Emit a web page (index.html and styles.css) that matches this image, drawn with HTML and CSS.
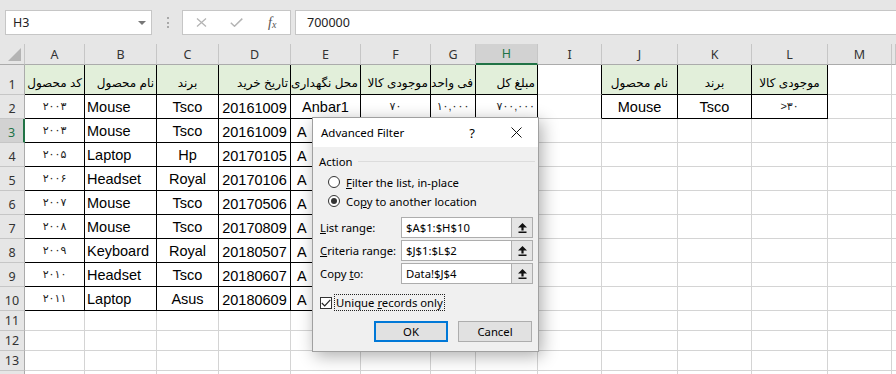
FILE: index.html
```html
<!DOCTYPE html>
<html>
<head>
    <meta charset="UTF-8">
    <title>Advanced Filter</title>
    <link rel="stylesheet" href="styles.css">
</head>
<body>
<div class="app">
    <!-- formula bar -->
    <div class="formula-bar">
        <div class="name-box">
            <span>H3</span>
            <span class="drop"></span>
        </div>
        <div class="grip"><i></i><i></i><i></i></div>
        <div class="fx-box">
            <svg width="11" height="9" viewBox="0 0 11 9"><path d="M1 0.5 L10 8.5 M10 0.5 L1 8.5" stroke="#b4b4b4" stroke-width="1.3" fill="none"/></svg>
            <svg width="13" height="9" viewBox="0 0 13 9"><path d="M0.8 4.8 L4.5 8.2 L12.3 0.6" stroke="#b4b4b4" stroke-width="1.5" fill="none"/></svg>
            <span class="fx">f<sub>x</sub></span>
        </div>
        <div class="formula-input">700000</div>
    </div>

    <!-- sheet -->
    <div class="sheet">
        <div class="row col-head">
            <div class="corner"><span class="corner-tri"></span></div>
            <div class="ch">A</div><div class="ch">B</div><div class="ch">C</div><div class="ch">D</div>
            <div class="ch">E</div><div class="ch">F</div><div class="ch">G</div><div class="ch sel">H</div>
            <div class="ch">I</div><div class="ch">J</div><div class="ch">K</div><div class="ch">L</div>
            <div class="ch">M</div><div class="ch"></div>
        </div>

        <div class="row r1">
            <div class="rh">1</div>
            <div class="c t h ar fa">کد محصول</div>
            <div class="c t h ar fa">نام محصول</div>
            <div class="c t h ac fa">برند</div>
            <div class="c t h ar fa">تاریخ خرید</div>
            <div class="c t h ar fa">محل نگهداری</div>
            <div class="c t h ar fa">موجودی کالا</div>
            <div class="c t h ar fa">فی واحد</div>
            <div class="c t h ar fa">مبلغ کل</div>
            <div class="c bl"></div>
            <div class="c t h ac fa">نام محصول</div>
            <div class="c t h ac fa">برند</div>
            <div class="c t h ac fa">موجودی کالا</div>
            <div class="c"></div><div class="c"></div>
        </div>

        <div class="row rd">
            <div class="rh">2</div>
            <div class="c t ac fn">۲۰۰۳</div><div class="c t al">Mouse</div><div class="c t ac">Tsco</div><div class="c t ac dt">20161009</div>
            <div class="c t ac">Anbar1</div><div class="c t ac fn">۷۰</div><div class="c t ac fn">۱۰,۰۰۰</div><div class="c t ar fn">۷۰۰,۰۰۰</div>
            <div class="c bl"></div>
            <div class="c t ac">Mouse</div><div class="c t ac">Tsco</div><div class="c t ac fn">&gt;۳۰</div>
            <div class="c"></div><div class="c"></div>
        </div>

        <div class="row rd">
            <div class="rh active">3</div>
            <div class="c t ac fn">۲۰۰۳</div><div class="c t al">Mouse</div><div class="c t ac">Tsco</div><div class="c t ac dt">20161009</div>
            <div class="c t al ea">A</div><div class="c t"></div><div class="c t"></div><div class="c t"></div>
            <div class="c"></div><div class="c"></div><div class="c"></div><div class="c"></div><div class="c"></div><div class="c"></div>
        </div>

        <div class="row rd">
            <div class="rh">4</div>
            <div class="c t ac fn">۲۰۰۵</div><div class="c t al">Laptop</div><div class="c t ac">Hp</div><div class="c t ac dt">20170105</div>
            <div class="c t al ea">A</div><div class="c t"></div><div class="c t"></div><div class="c t"></div>
            <div class="c"></div><div class="c"></div><div class="c"></div><div class="c"></div><div class="c"></div><div class="c"></div>
        </div>

        <div class="row rd">
            <div class="rh">5</div>
            <div class="c t ac fn">۲۰۰۶</div><div class="c t al">Headset</div><div class="c t ac">Royal</div><div class="c t ac dt">20170106</div>
            <div class="c t al ea">A</div><div class="c t"></div><div class="c t"></div><div class="c t"></div>
            <div class="c"></div><div class="c"></div><div class="c"></div><div class="c"></div><div class="c"></div><div class="c"></div>
        </div>

        <div class="row rd">
            <div class="rh">6</div>
            <div class="c t ac fn">۲۰۰۷</div><div class="c t al">Mouse</div><div class="c t ac">Tsco</div><div class="c t ac dt">20170506</div>
            <div class="c t al ea">A</div><div class="c t"></div><div class="c t"></div><div class="c t"></div>
            <div class="c"></div><div class="c"></div><div class="c"></div><div class="c"></div><div class="c"></div><div class="c"></div>
        </div>

        <div class="row rd">
            <div class="rh">7</div>
            <div class="c t ac fn">۲۰۰۸</div><div class="c t al">Mouse</div><div class="c t ac">Tsco</div><div class="c t ac dt">20170809</div>
            <div class="c t al ea">A</div><div class="c t"></div><div class="c t"></div><div class="c t"></div>
            <div class="c"></div><div class="c"></div><div class="c"></div><div class="c"></div><div class="c"></div><div class="c"></div>
        </div>

        <div class="row rd">
            <div class="rh">8</div>
            <div class="c t ac fn">۲۰۰۹</div><div class="c t al">Keyboard</div><div class="c t ac">Royal</div><div class="c t ac dt">20180507</div>
            <div class="c t al ea">A</div><div class="c t"></div><div class="c t"></div><div class="c t"></div>
            <div class="c"></div><div class="c"></div><div class="c"></div><div class="c"></div><div class="c"></div><div class="c"></div>
        </div>

        <div class="row rd">
            <div class="rh">9</div>
            <div class="c t ac fn">۲۰۱۰</div><div class="c t al">Headset</div><div class="c t ac">Tsco</div><div class="c t ac dt">20180607</div>
            <div class="c t al ea">A</div><div class="c t"></div><div class="c t"></div><div class="c t"></div>
            <div class="c"></div><div class="c"></div><div class="c"></div><div class="c"></div><div class="c"></div><div class="c"></div>
        </div>

        <div class="row rd">
            <div class="rh">10</div>
            <div class="c t ac fn">۲۰۱۱</div><div class="c t al">Laptop</div><div class="c t ac">Asus</div><div class="c t ac dt">20180609</div>
            <div class="c t al ea">A</div><div class="c t"></div><div class="c t"></div><div class="c t"></div>
            <div class="c"></div><div class="c"></div><div class="c"></div><div class="c"></div><div class="c"></div><div class="c"></div>
        </div>

        <div class="row re">
            <div class="rh">11</div>
            <div class="c"></div><div class="c"></div><div class="c"></div><div class="c"></div><div class="c"></div><div class="c"></div><div class="c"></div>
            <div class="c"></div><div class="c"></div><div class="c"></div><div class="c"></div><div class="c"></div><div class="c"></div><div class="c"></div>
        </div>
        <div class="row re">
            <div class="rh">12</div>
            <div class="c"></div><div class="c"></div><div class="c"></div><div class="c"></div><div class="c"></div><div class="c"></div><div class="c"></div>
            <div class="c"></div><div class="c"></div><div class="c"></div><div class="c"></div><div class="c"></div><div class="c"></div><div class="c"></div>
        </div>
        <div class="row re">
            <div class="rh">13</div>
            <div class="c"></div><div class="c"></div><div class="c"></div><div class="c"></div><div class="c"></div><div class="c"></div><div class="c"></div>
            <div class="c"></div><div class="c"></div><div class="c"></div><div class="c"></div><div class="c"></div><div class="c"></div><div class="c"></div>
        </div>
        <div class="row re">
            <div class="rh"></div>
            <div class="c"></div><div class="c"></div><div class="c"></div><div class="c"></div><div class="c"></div><div class="c"></div><div class="c"></div>
            <div class="c"></div><div class="c"></div><div class="c"></div><div class="c"></div><div class="c"></div><div class="c"></div><div class="c"></div>
        </div>
    </div>

    <!-- Advanced Filter dialog -->
    <div class="dialog">
        <div class="dlg-title">
            <span class="dlg-name">Advanced Filter</span>
            <span class="dlg-help">?</span>
            <svg class="dlg-close" width="11" height="11" viewBox="0 0 11 11"><path d="M0.5 0.5 L10.5 10.5 M10.5 0.5 L0.5 10.5" stroke="#111" stroke-width="1" fill="none"/></svg>
        </div>
        <div class="dlg-body">
            <div class="group-head"><span>Action</span><span class="group-line"></span></div>
            <div class="radio-row first"><span class="radio"></span><span><u>F</u>ilter the list, in-place</span></div>
            <div class="radio-row"><span class="radio on"></span><span>Co<u>p</u>y to another location</span></div>

            <div class="range-row first">
                <span class="range-label"><u>L</u>ist range:</span>
                <div class="range"><span class="range-input">$A$1:$H$10</span><span class="range-btn"><svg width="9" height="10" viewBox="0 0 9 10"><path d="M4.5 0 L9 4.5 H5.6 V7.6 H3.4 V4.5 H0 Z" fill="#111"/><rect x="0.5" y="8.5" width="8" height="1.5" fill="#111"/></svg></span></div>
            </div>
            <div class="range-row">
                <span class="range-label"><u>C</u>riteria range:</span>
                <div class="range"><span class="range-input">$J$1:$L$2</span><span class="range-btn"><svg width="9" height="10" viewBox="0 0 9 10"><path d="M4.5 0 L9 4.5 H5.6 V7.6 H3.4 V4.5 H0 Z" fill="#111"/><rect x="0.5" y="8.5" width="8" height="1.5" fill="#111"/></svg></span></div>
            </div>
            <div class="range-row">
                <span class="range-label">Copy <u>t</u>o:</span>
                <div class="range"><span class="range-input">Data!$J$4</span><span class="range-btn"><svg width="9" height="10" viewBox="0 0 9 10"><path d="M4.5 0 L9 4.5 H5.6 V7.6 H3.4 V4.5 H0 Z" fill="#111"/><rect x="0.5" y="8.5" width="8" height="1.5" fill="#111"/></svg></span></div>
            </div>

            <div class="check-row">
                <span class="check"><svg width="10" height="8" viewBox="0 0 10 8"><path d="M0.8 4 L3.7 6.9 L9.3 0.8" stroke="#222" stroke-width="1.2" fill="none"/></svg></span>
                <span class="check-label">Unique <u>r</u>ecords only</span>
            </div>

            <div class="buttons">
                <div class="btn default">OK</div>
                <div class="btn">Cancel</div>
            </div>
        </div>
    </div>
</div>
</body>
</html>
```

FILE: styles.css
```css
body {
    margin: 0;
    background-color: #fff;
    font-family: "Liberation Sans", "DejaVu Sans", sans-serif;
    overflow: hidden;
}

.app {
    position: relative;
    width: 896px;
    height: 374px;
    overflow: hidden;
}

/* formula bar */
.formula-bar {
    height: 44px;
    box-sizing: border-box;
    padding-top: 10px;
    background-color: #e6e6e6;
    display: flex;
    align-items: flex-start;
    font-family: "Noto Sans", sans-serif;
    font-size: 12.5px;
    color: #222;
}

.name-box {
    margin-left: 5px;
    width: 147px;
    height: 25px;
    box-sizing: border-box;
    background-color: #fff;
    border: 1px solid #c6c6c6;
    display: flex;
    align-items: center;
    justify-content: space-between;
    padding: 0 5px 0 7px;
}

.drop {
    width: 0;
    height: 0;
    border-left: 4px solid transparent;
    border-right: 4px solid transparent;
    border-top: 4px solid #777;
}

.grip {
    width: 2px;
    margin: 7px 13px 0 15px;
    display: flex;
    flex-direction: column;
    gap: 2.5px;
}

    .grip i {
        display: block;
        width: 2px;
        height: 2px;
        background-color: #a8a8a8;
    }

.fx-box {
    width: 109px;
    height: 25px;
    box-sizing: border-box;
    background-color: #fff;
    border: 1px solid #c6c6c6;
    display: flex;
    align-items: center;
    padding-left: 13px;
    gap: 23px;
}

.fx {
    font-family: "Liberation Serif", serif;
    font-style: italic;
    font-size: 14px;
    color: #555;
    margin-left: 2px;
}

    .fx sub {
        font-size: 10px;
        vertical-align: -1px;
    }

.formula-input {
    flex: 1;
    margin-left: 4px;
    margin-right: -2px;
    height: 25px;
    box-sizing: border-box;
    background-color: #fff;
    border: 1px solid #c6c6c6;
    padding-left: 11px;
    line-height: 23px;
}

/* sheet grid */
.row {
    display: grid;
    grid-template-columns: 25px 60px 72px 62px 72px 70px 70px 45px 62px 64px 76px 74px 76px 64px 1fr;
}

.col-head {
    height: 21px;
    background-color: #e6e6e6;
}

.corner {
    position: relative;
    border-right: 1px solid #c6c6c6;
    border-bottom: 1px solid #ababab;
}

.corner-tri {
    position: absolute;
    right: 3px;
    bottom: 3px;
    width: 0;
    height: 0;
    border-left: 13px solid transparent;
    border-bottom: 13px solid #b4b4b4;
}

.ch {
    box-sizing: border-box;
    border-right: 1px solid #c6c6c6;
    border-bottom: 1px solid #ababab;
    display: flex;
    align-items: center;
    justify-content: center;
    font-family: "Noto Sans", sans-serif;
    font-size: 12.5px;
    color: #333;
}

    .ch.sel {
        background-color: #d2d2d2;
        color: #217346;
        border-bottom: 2px solid #217346;
    }

.r1 { height: 30px; }
.rd { height: 24px; }
.re { height: 20px; }

.rh {
    box-sizing: border-box;
    background-color: #e6e6e6;
    border-right: 1px solid #ababab;
    border-bottom: 1px solid #c6c6c6;
    display: flex;
    align-items: flex-end;
    justify-content: center;
    padding-bottom: 1px;
    font-family: "Noto Sans", sans-serif;
    font-size: 12.5px;
    color: #333;
}

    .rh.active {
        background-color: #d2d2d2;
        color: #217346;
        border-right: 2px solid #217346;
    }

.c {
    box-sizing: border-box;
    border-right: 1px solid #d4d4d4;
    border-bottom: 1px solid #d4d4d4;
    display: flex;
    align-items: center;
    overflow: hidden;
    white-space: nowrap;
    padding: 0 2px;
    font-size: 14.5px;
    color: #000;
}

.t {
    border-right-color: #000;
    border-bottom-color: #000;
}

.bl {
    border-right-color: #000;
}

.h {
    background-color: #e2efda;
}

.al { justify-content: flex-start; }
.ac { justify-content: center; }
.ar { justify-content: flex-end; }

.fa {
    font-size: 12px;
    align-items: flex-end;
    padding-bottom: 4px;
}

.fn {
    font-size: 11px;
    color: #222;
}

.dt {
    padding-top: 3px;
}

.ea {
    padding-left: 6px;
    padding-top: 2px;
}

/* dialog */
.dialog {
    position: absolute;
    left: 312px;
    top: 117px;
    width: 227px;
    height: 235px;
    box-sizing: border-box;
    border: 1px solid #a0a0a0;
    background-color: #f0f0f0;
    box-shadow: 3px 4px 16px rgba(0, 0, 0, 0.32);
    font-family: "Noto Sans", sans-serif;
    font-size: 11.3px;
    color: #000;
}

.dlg-title {
    height: 29px;
    background-color: #fff;
    display: flex;
    align-items: center;
    padding-left: 8px;
    font-size: 11.5px;
}

.dlg-name {
    flex: 1;
}

.dlg-help {
    font-size: 13px;
    margin-right: 36px;
}

.dlg-close {
    margin-right: 16px;
}

.dlg-body {
    padding: 0 3px 0 6px;
}

.group-head {
    margin-top: 6px;
    height: 16px;
    display: flex;
    align-items: center;
    gap: 6px;
}

.group-line {
    flex: 1;
    height: 1px;
    background-color: #dcdcdc;
}

.radio-row {
    height: 14px;
    margin-top: 5px;
    margin-left: 9px;
    display: flex;
    align-items: center;
    gap: 6px;
}

    .radio-row.first {
        margin-top: 6px;
    }

.radio {
    width: 12px;
    height: 12px;
    box-sizing: border-box;
    border: 1px solid #333;
    border-radius: 50%;
    background-color: #fff;
    display: flex;
    align-items: center;
    justify-content: center;
}

    .radio.on::after {
        content: "";
        width: 6px;
        height: 6px;
        border-radius: 50%;
        background-color: #333;
    }

.range-row {
    height: 21px;
    margin-top: 2px;
    margin-left: 1px;
    margin-right: 2px;
    display: flex;
    align-items: center;
}

    .range-row.first {
        margin-top: 9px;
    }

.range-label {
    width: 81px;
}

.range {
    flex: 1;
    height: 21px;
    display: flex;
}

.range-input {
    flex: 1;
    box-sizing: border-box;
    background-color: #fff;
    border: 1px solid #adadad;
    padding-left: 4px;
    line-height: 19px;
}

.range-btn {
    width: 21px;
    box-sizing: border-box;
    background-color: #e5e5e5;
    border: 1px solid #adadad;
    border-left: none;
    display: flex;
    align-items: center;
    justify-content: center;
}

.check-row {
    height: 17px;
    margin-top: 10px;
    margin-left: 1px;
    display: flex;
    align-items: center;
}

.check {
    width: 12px;
    height: 12px;
    box-sizing: border-box;
    border: 1px solid #333;
    background-color: #fff;
    display: flex;
    align-items: center;
    justify-content: center;
}

.check-label {
    margin-left: 2px;
    padding: 0 1px;
    height: 17px;
    box-sizing: border-box;
    border: 1px dotted #222;
    line-height: 15px;
}

.buttons {
    margin-top: 10px;
    margin-right: 3px;
    display: flex;
    justify-content: flex-end;
    gap: 10px;
}

.btn {
    width: 74px;
    height: 21px;
    box-sizing: border-box;
    background-color: #e1e1e1;
    border: 1px solid #adadad;
    display: flex;
    align-items: center;
    justify-content: center;
}

    .btn.default {
        border: 2px solid #0078d7;
    }
```
